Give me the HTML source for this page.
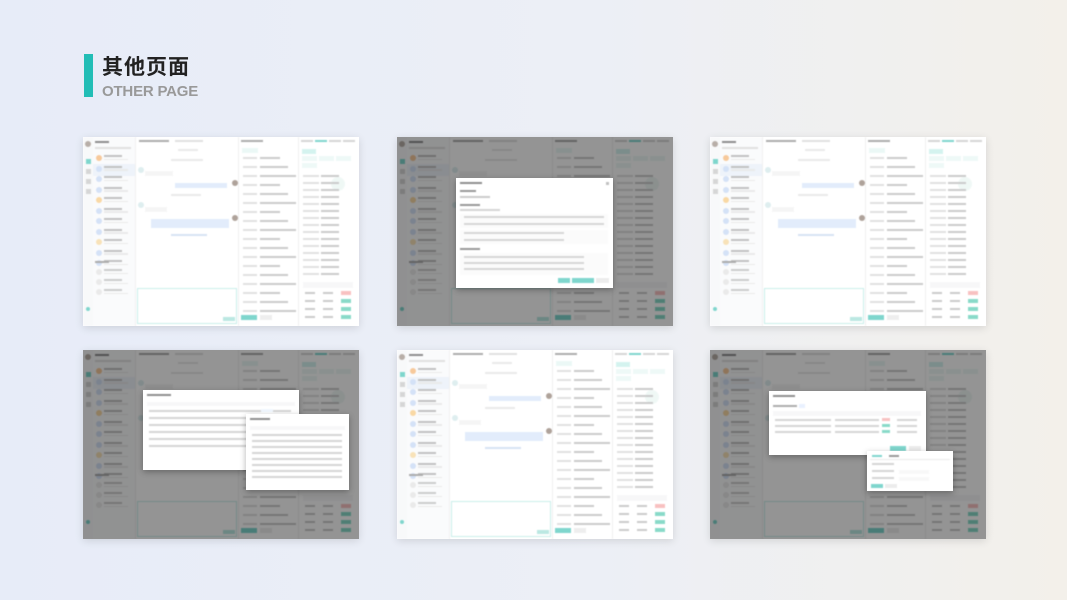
<!DOCTYPE html>
<html><head><meta charset="utf-8"><style>
*{margin:0;padding:0;box-sizing:border-box}
body{width:1067px;height:600px;overflow:hidden;position:relative;background:linear-gradient(90deg,#e7ecf8 0%,#eceff6 55%,#f3f0ea 100%);font-family:"Liberation Sans","Noto Sans CJK SC",sans-serif}
.bar{position:absolute;left:84px;top:54px;width:9px;height:43px;background:#22bdb6}
.t1{position:absolute;left:102px;top:51px;font-size:21px;font-weight:bold;color:#222;letter-spacing:1px}
.t2{position:absolute;left:102px;top:83px;font-size:15px;font-weight:bold;color:#999;letter-spacing:-0.2px}
.th{position:absolute;width:276px;height:189px;background:#fff;overflow:hidden;box-shadow:0 2px 8px rgba(0,0,0,.12)}
.th div{position:absolute}
.in{left:0;top:0;width:100%;height:100%;opacity:.6;filter:blur(0.4px)}
.ov{left:0;top:0;width:100%;height:100%;background:rgba(0,0,0,.42)}
.modal{background:#fff;box-shadow:0 2px 6px rgba(0,0,0,.3)}
.mi{left:0;top:0;width:100%;height:100%;opacity:.6;filter:blur(0.4px)}
</style></head><body>
<div class="bar"></div>
<div class="t1">其他页面</div>
<div class="t2">OTHER PAGE</div>
<div id="w"></div>
<script>
function L(x,y,w,h,c){return '<div style="left:'+x+'px;top:'+y+'px;width:'+w+'px;height:'+h+'px;background:'+c+'"></div>';}
function C(x,y,d,c){return '<div style="left:'+x+'px;top:'+y+'px;width:'+d+'px;height:'+d+'px;border-radius:50%;background:'+c+'"></div>';}
function thumb(x,y,dark,m){
 var h='';
 h+=L(0,0,10,189,'#f5f6f8');h+=C(2,4,6,'#8a7a70');
 for(var i=0;i<4;i++)h+=L(3,22+i*10,5,5,i==0?'#2bbbad':'#bbb');
 h+=L(10,0,42,189,'#f8f9fb');h+=L(12,4,14,2,'#444');
 h+=L(12,10,36,2,'#ccc');h+=L(10,27,42,12,'#e3ecf7');
 var cols=['#f2a65a','#b9cff2','#b9cff2','#b9cff2','#f6c06a','#b9cff2','#b9cff2','#b9cff2','#f4d08a','#b9cff2','#b9cff2'];
 for(var i=0;i<11;i++){var yy=18+i*10.5;h+=C(13,yy,6,cols[i]);h+=L(21,yy,18,2,'#999');h+=L(21,yy+3.5,24,1.5,'#ddd');}
 h+=L(12,124,14,2,'#777');
 for(var i=0;i<3;i++){var yy=132+i*10;h+=C(13,yy,6,'#ddd');h+=L(21,yy,18,2,'#aaa');h+=L(21,yy+3.5,24,1.5,'#ddd');}
 h+=C(3,170,4,'#2bbbad');
 h+=L(52,0,1,189,'#e6e6e6');
 h+=L(56,3,30,2,'#777');h+=L(92,3,28,2,'#ccc');
 h+=L(95,12,20,1.5,'#ddd');h+=L(88,22,32,2,'#ddd');
 h+=C(55,30,6,'#c9e3e5');h+=L(62,34,28,5,'#f0f0f0');
 h+=L(92,46,52,5,'#cfe0fa');h+=C(149,43,6,'#7a6658');
 h+=L(88,57,30,2,'#ddd');
 h+=C(55,65,6,'#c9e3e5');h+=L(62,70,22,5,'#f0f0f0');
 h+=L(68,82,78,9,'#cfe0fa');h+=C(149,78,6,'#7a6658');
 h+=L(88,97,36,2,'#bcd0ec');
 h+=L(54,151,100,36,'#fff');h+='<div style="left:54px;top:151px;width:100px;height:36px;border:1px solid #a8e3dd"></div>';
 h+=L(140,180,12,4,'#8fd9d0');
 h+=L(155,0,1,189,'#e6e6e6');
 h+=L(158,3,22,2,'#777');h+=L(159,11,16,5,'#dff4f1');
 for(var i=0;i<18;i++){h+=L(160,20+i*9,14,1.5,'#ccc');h+=L(177,20+i*9,20+(i%3)*8,1.5,'#aaa');}
 h+=L(158,178,16,5,'#2bbbad');h+=L(177,178,12,5,'#e4e4e4');
 h+=L(215,0,1,189,'#e6e6e6');
 for(var i=0;i<4;i++)h+=L(218+i*14,3,12,2,i==1?'#2bbbad':'#bbb');
 h+=L(219,12,14,5,'#b9ece6');
 for(var i=0;i<4;i++)h+=L(219+(i%3)*17,19+Math.floor(i/3)*7,15,5,'#e4f6f3');
 h+=C(248,40,14,'#e6f4f0');
 for(var i=0;i<15;i++){h+=L(220,38+i*7,16,1.5,'#ccc');h+=L(238,38+i*7,18,1.5,'#aaa');}
 h+=L(220,145,50,6,'#f2f3f5');
 for(var i=0;i<4;i++){h+=L(222,155+i*8,10,1.5,'#aaa');h+=L(240,155+i*8,10,1.5,'#aaa');h+=L(258,154+i*8,10,4,i==0?'#f49999':'#3cc3a6');}
 h='<div class="in">'+h+'</div>';
 if(dark)h+='<div class="ov"></div>';
 if(m)h+=m;
 return '<div class="th" style="left:'+x+'px;top:'+y+'px">'+h+'</div>';
}
function rows(x,y,w,n,gap){var h='';for(var i=0;i<n;i++)h+=L(x,y+i*gap,w,1.5,'#bbb');return h;}
function M(x,y,w,hh,inner){return '<div class="modal" style="left:'+x+'px;top:'+y+'px;width:'+w+'px;height:'+hh+'px"><div class="mi">'+inner+'</div></div>';}
var m2=M(59,41,157,110,L(4,4,22,2,'#444')+L(150,4,3,3,'#999')+L(4,12,16,1.5,'#555')+L(4,18,30,1.5,'#aaa')+L(4,26,20,1.5,'#555')+L(4,31,40,1.5,'#bbb')+L(4,36,148,14,'#fafafa')+rows(8,38,140,2,7)+L(4,52,148,14,'#fafafa')+rows(8,54,100,2,7)+L(4,70,20,1.5,'#555')+L(4,75,148,22,'#fafafa')+rows(8,78,120,3,6)+L(102,100,12,5,'#2bbbad')+L(116,100,22,5,'#2bbbad')+L(140,100,13,5,'#e0e0e0'));
var m4=M(60,40,156,80,L(4,4,24,2,'#444')+L(4,12,148,4,'#f2f3f5')+rows(6,20,142,6,7)+L(118,19,12,3,'#e8f3ff'))+M(163,64,103,76,L(4,4,20,2,'#444')+L(4,12,95,4,'#f2f3f5')+rows(6,20,90,8,6));
var m6=M(59,41,157,64,L(4,4,22,2,'#444')+L(4,14,24,2,'#777')+L(30,13,6,4,'#dbe8ff')+L(4,20,148,5,'#f2f3f5')+rows(6,28,36,3,6)+rows(32,28,30,3,6)+rows(66,28,20,3,6)+rows(86,28,24,3,6)+L(113,27,8,3,'#f29a9a')+L(113,33,8,3,'#3cc3a6')+L(113,39,8,3,'#3cc3a6')+rows(128,28,20,3,6)+L(121,55,16,5,'#2bbbad')+L(140,55,12,5,'#e0e0e0'))+M(157,101,86,40,L(5,4,10,1.5,'#2bbbad')+L(22,4,10,1.5,'#555')+L(3,8,80,0.5,'#ddd')+rows(5,12,22,3,7)+L(32,19,30,4,'#f4f4f4')+L(32,26,30,4,'#f4f4f4')+L(4,33,12,4,'#2bbbad')+L(18,33,12,4,'#e0e0e0'));
document.getElementById('w').innerHTML=thumb(83,137,0)+thumb(397,137,1,m2)+thumb(710,137,0)+thumb(83,350,1,m4)+thumb(397,350,0)+thumb(710,350,1,m6);
</script>
</body></html>
